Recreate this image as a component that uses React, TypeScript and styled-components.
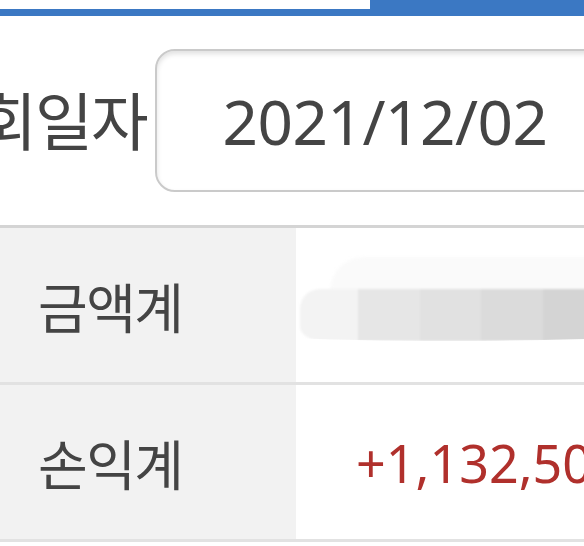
import React from "react";
import styled, { createGlobalStyle } from "styled-components";

const GlobalStyle = createGlobalStyle`
  html, body {
    margin: 0;
    padding: 0;
    background: #ffffff;
    overflow: hidden;
  }
  body {
    font-family: "Noto Sans", "Noto Sans CJK KR", sans-serif;
    color: #444444;
  }
`;

const Page = styled.div`
  width: 584px;
  height: 546px;
  overflow: hidden;
  display: flex;
  flex-direction: column;
`;

const TabBar = styled.div`
  display: flex;
  height: 16px;
`;

const Tab = styled.div<{ $active?: boolean }>`
  box-sizing: border-box;
  height: 16px;
  flex: ${(p) => (p.$active ? "1" : "0 0 370px")};
  background: ${(p) => (p.$active ? "#3b78c3" : "#ffffff")};
  border-bottom: 7px solid #3b78c3;
`;

const FilterRow = styled.div`
  display: flex;
  align-items: center;
  gap: 8px;
  margin-top: 33px;
  height: 143px;
  overflow: hidden;
`;

const FilterLabel = styled.div`
  flex: 0 0 147px;
  display: flex;
  justify-content: flex-end;
  overflow: hidden;
  white-space: nowrap;
  font-size: 63px;
  line-height: 1;
  color: #444444;
  letter-spacing: -2px;
`;

const DateBox = styled.div`
  flex: 0 0 460px;
  box-sizing: border-box;
  height: 143px;
  border: 2px solid #cacaca;
  border-radius: 20px;
  box-shadow: inset 0 3px 5px rgba(0, 0, 0, 0.12);
  display: flex;
  align-items: center;
  justify-content: center;
  font-size: 62px;
  color: #444444;
  letter-spacing: -0.5px;
`;

const Table = styled.div`
  margin-top: 33px;
  border-top: 3px solid #d4d4d4;
`;

const Row = styled.div`
  display: grid;
  grid-template-columns: 296px 1fr;
  height: 154px;
  border-bottom: 3px solid #e2e2e2;
`;

const HeadCell = styled.div`
  background: #f2f2f2;
  display: flex;
  align-items: center;
  padding-left: 38px;
  font-size: 54px;
  color: #444444;
  letter-spacing: -1.5px;
`;

const ValueCell = styled.div<{ $tone?: "profit" }>`
  display: flex;
  align-items: center;
  padding-left: 60px;
  white-space: nowrap;
  overflow: hidden;
  font-size: 52px;
  color: ${(p) => (p.$tone === "profit" ? "#b0302c" : "#444444")};
  position: relative;
`;

const Redaction = styled.div`
  position: absolute;
  left: 4px;
  top: 29px;
  width: 300px;
  height: 84px;
  pointer-events: none;
`;

const RedactTop = styled.div`
  position: absolute;
  left: 30px;
  top: 0;
  right: 0;
  height: 34px;
  background: #fafafa;
  border-radius: 40px 0 0 0;
  filter: blur(1.5px);
`;

const RedactBand = styled.div`
  position: absolute;
  left: 0;
  top: 32px;
  right: 0;
  height: 52px;
  border-radius: 20px 0 8px 24px / 20px 0 8px 14px;
  background: linear-gradient(
    to right,
    #f3f3f3 0 58px,
    #e6e6e6 58px 120px,
    #e1e1e1 120px 181px,
    #dbdbdb 181px 243px,
    #d4d4d4 243px
  );
  clip-path: ellipse(160% 100% at 50% 0%);
  filter: blur(0.8px);
`;

export default function App() {
  return (
    <>
      <GlobalStyle />
      <Page>
        <TabBar>
          <Tab />
          <Tab $active />
        </TabBar>
        <FilterRow>
          <FilterLabel>
            <span>조회일자</span>
          </FilterLabel>
          <DateBox>2021/12/02</DateBox>
        </FilterRow>
        <Table>
          <Row>
            <HeadCell>금액계</HeadCell>
            <ValueCell>
              <Redaction>
                <RedactTop />
                <RedactBand />
              </Redaction>
            </ValueCell>
          </Row>
          <Row>
            <HeadCell>손익계</HeadCell>
            <ValueCell $tone="profit">+1,132,500</ValueCell>
          </Row>
        </Table>
      </Page>
    </>
  );
}
